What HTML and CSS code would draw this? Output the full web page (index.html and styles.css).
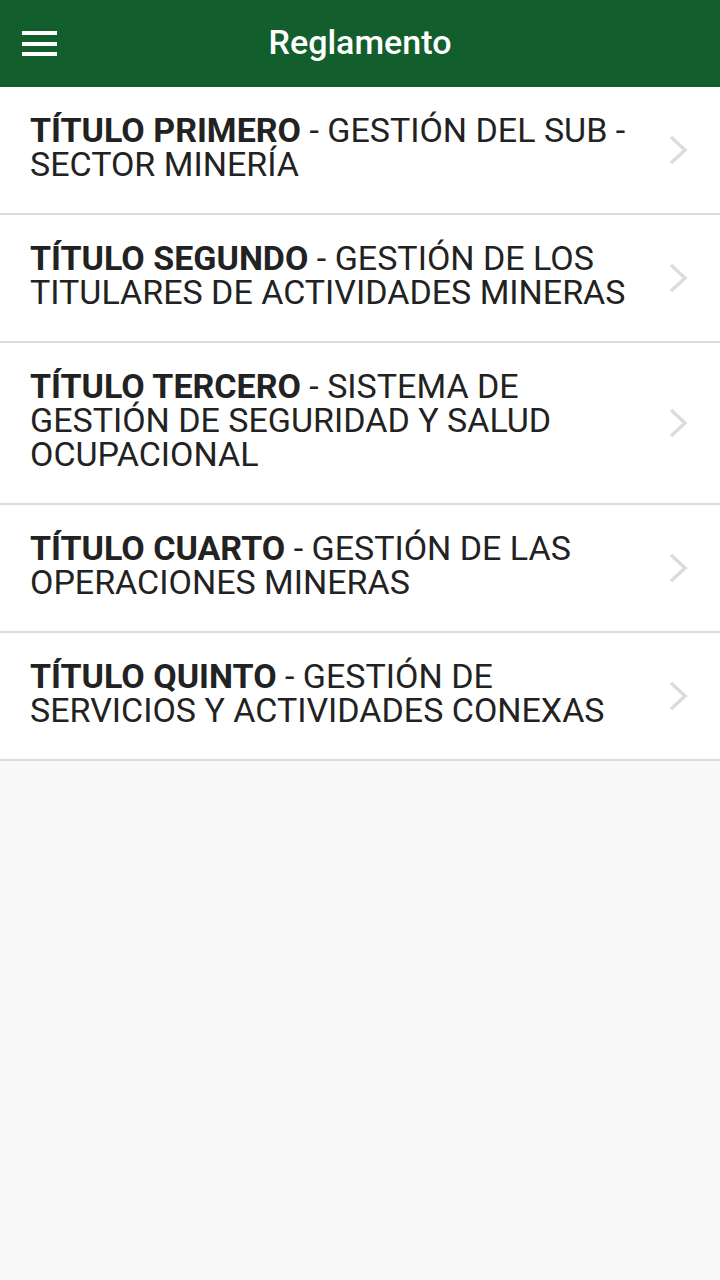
FILE: index.html
```html
<!DOCTYPE html>
<html lang="es">
<head>
<meta charset="utf-8">
<title>Reglamento</title>
<link rel="stylesheet" href="styles.css">
</head>
<body>
<header class="bar">
  <button class="menu" aria-label="Menú">
    <span></span><span></span><span></span>
  </button>
  <h1 class="title">Reglamento</h1>
</header>
<ul class="list">
  <li class="item">
    <p class="text"><b>TÍTULO PRIMERO</b> - GESTIÓN DEL SUB - SECTOR MINERÍA</p>
    <svg class="chev" viewBox="0 0 20 30"><path d="M3 2 L17 15 L3 28" fill="none" stroke="#dcdcdc" stroke-width="3.5"/></svg>
  </li>
  <li class="item">
    <p class="text"><b>TÍTULO SEGUNDO</b> - GESTIÓN DE LOS TITULARES DE ACTIVIDADES MINERAS</p>
    <svg class="chev" viewBox="0 0 20 30"><path d="M3 2 L17 15 L3 28" fill="none" stroke="#dcdcdc" stroke-width="3.5"/></svg>
  </li>
  <li class="item">
    <p class="text"><b>TÍTULO TERCERO</b> - SISTEMA DE GESTIÓN DE SEGURIDAD Y SALUD OCUPACIONAL</p>
    <svg class="chev" viewBox="0 0 20 30"><path d="M3 2 L17 15 L3 28" fill="none" stroke="#dcdcdc" stroke-width="3.5"/></svg>
  </li>
  <li class="item">
    <p class="text"><b>TÍTULO CUARTO</b> - GESTIÓN DE LAS OPERACIONES MINERAS</p>
    <svg class="chev" viewBox="0 0 20 30"><path d="M3 2 L17 15 L3 28" fill="none" stroke="#dcdcdc" stroke-width="3.5"/></svg>
  </li>
  <li class="item">
    <p class="text"><b>TÍTULO QUINTO</b> - GESTIÓN DE SERVICIOS Y ACTIVIDADES CONEXAS</p>
    <svg class="chev" viewBox="0 0 20 30"><path d="M3 2 L17 15 L3 28" fill="none" stroke="#dcdcdc" stroke-width="3.5"/></svg>
  </li>
</ul>
</body>
</html>
```
FILE: styles.css
```css
html, body {
  margin: 0;
  padding: 0;
  background: #f8f8f8;
  font-family: Roboto, "Liberation Sans", sans-serif;
}
.bar {
  height: 87px;
  background: #125f2d;
  display: flex;
  align-items: center;
  justify-content: center;
  position: relative;
}
.menu {
  position: absolute;
  left: 22px;
  top: 31px;
  width: 35px;
  padding: 0;
  border: 0;
  background: none;
  display: flex;
  flex-direction: column;
  gap: 6.5px;
}
.menu span {
  display: block;
  height: 4px;
  background: #fff;
}
.title {
  margin: 0 0 4px;
  color: #fff;
  font-size: 34px;
  font-weight: 500;
}
.list {
  list-style: none;
  margin: 0;
  padding: 0;
  background: #fff;
}
.item {
  display: flex;
  align-items: center;
  padding: 26px 32px 32px 30px;
  border-bottom: 2px solid #dcdcdc;
}
.text {
  flex: 1;
  margin: 0;
  font-size: 34px;
  line-height: 34px;
  color: #222;
  padding-right: 18px;
}
.text b {
  font-weight: 700;
}
.chev {
  width: 20px;
  height: 30px;
  flex: none;
  margin-top: 6px;
}
```
